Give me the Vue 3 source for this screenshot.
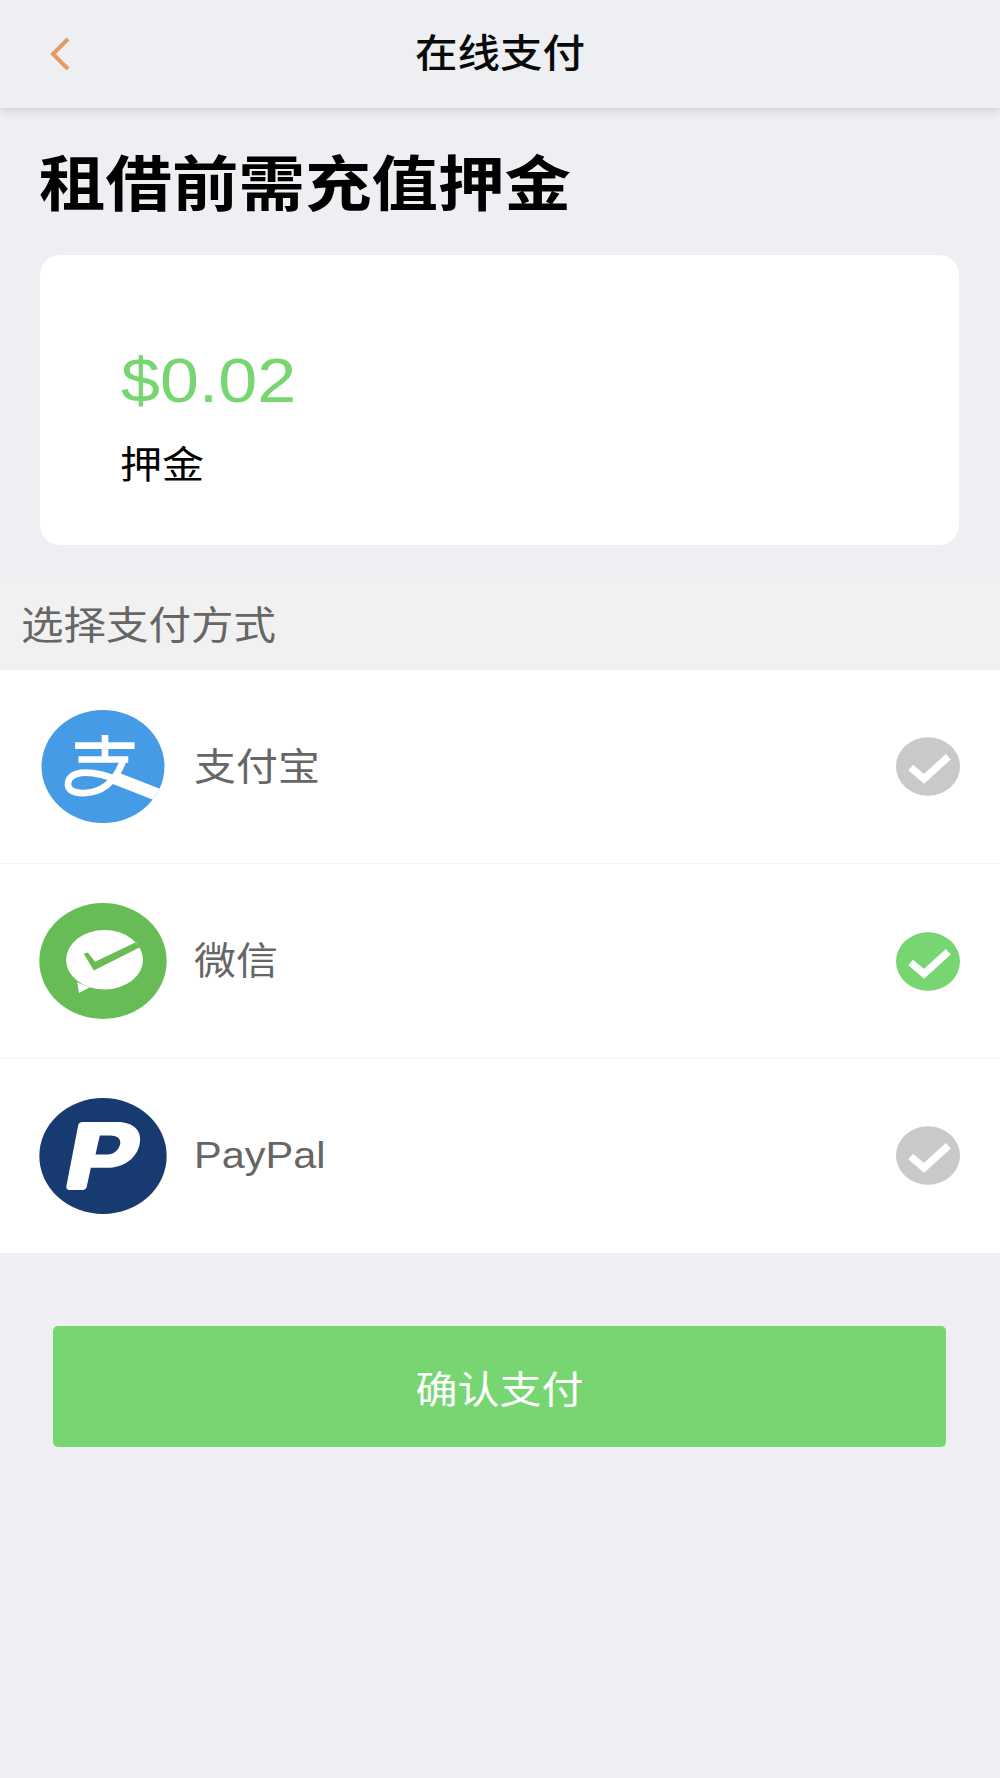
<script setup>
import { ref } from 'vue';

const methods = [
  { id: 'alipay', name: '支付宝' },
  { id: 'wechat', name: '微信' },
  { id: 'paypal', name: 'PayPal' }
];

const selected = ref('wechat');
</script>

<template>
  <div class="page">
    <header class="top-bar">
      <button class="back" aria-label="返回">
        <svg width="22" height="34" viewBox="0 0 22 34">
          <path d="M19 2 L4 17 L19 32" fill="none" stroke="#e49b66" stroke-width="4" />
        </svg>
      </button>
      <h1 class="top-title"><span class="squash">在线支付</span></h1>
    </header>

    <h2 class="headline"><span class="squash">租借前需充值押金</span></h2>

    <section class="deposit-card">
      <div class="amount"><span class="squash">$0.02</span></div>
      <div class="amount-label"><span class="squash">押金</span></div>
    </section>

    <div class="section-title"><span class="squash">选择支付方式</span></div>

    <ul class="method-list">
      <li
        v-for="method in methods"
        :key="method.id"
        class="method"
        :class="'method-' + method.id"
        @click="selected = method.id"
      >
        <!-- 支付宝 -->
        <svg v-if="method.id === 'alipay'" class="logo logo-alipay" viewBox="125 60 370 340">
          <defs>
            <clipPath id="alipay-clip"><ellipse cx="310" cy="230" rx="185" ry="170" /></clipPath>
          </defs>
          <ellipse cx="310" cy="230" rx="185" ry="170" fill="#459be5" />
          <g clip-path="url(#alipay-clip)" fill="none" stroke="#fff">
            <path d="M226 167 H405 M236 209 H386 M316 135 V209" stroke-width="20" />
            <path d="M372 209 C350 270 310 310 250 310 C215 310 200 296 206 274 C212 254 240 245 280 250 C320 255 350 268 400 290" stroke-width="20" />
            <path d="M345 264 L500 325" stroke-width="38" />
          </g>
        </svg>

        <!-- 微信 -->
        <svg v-else-if="method.id === 'wechat'" class="logo logo-wechat" viewBox="117 68 381 347">
          <ellipse cx="307.5" cy="241.5" rx="190.5" ry="173.5" fill="#68bc56" />
          <ellipse cx="312" cy="238" rx="115" ry="89" fill="#fff" />
          <path d="M230 305 L236 337 L268 320 Z" fill="#fff" />
          <path d="M250 220 L262 216 L284 244 L404 186 L418 200 L280 270 Z" fill="#68bc56" />
        </svg>

        <!-- PayPal -->
        <svg v-else class="logo logo-paypal" viewBox="117 85 381 347">
          <ellipse cx="307.5" cy="258.5" rx="190.5" ry="173.5" fill="#173b70" />
          <path
            fill="#fff"
            fill-rule="evenodd"
            d="M246 157 L350 157 C400 157 428 185 416 228 C405 270 365 294 320 294 L271 294 L259 350 Q257 360 246 360 L208 360 Q196 360 198 348 L233 168 Q235 157 246 157 Z M298 197 L285 254 L320 254 C345 254 356 236 359 222 C362 205 347 197 330 197 Z"
          />
        </svg>

        <span class="method-name"><span class="squash">{{ method.name }}</span></span>

        <svg class="check" viewBox="108 85 192 176">
          <ellipse cx="204" cy="173" rx="96" ry="88" :fill="selected === method.id ? '#77d672' : '#c9c9c9'" />
          <path d="M152 176 L192 210 L265 144" fill="none" stroke="#fff" stroke-width="22" />
        </svg>
      </li>
    </ul>

    <button class="confirm"><span class="squash">确认支付</span></button>
  </div>
</template>

<style>
html, body {
  margin: 0;
  background: #eeeef3;
}
</style>

<style scoped>
.page {
  min-height: 1778px;
  background: #eeeef3;
  font-family: "Liberation Sans", "Noto Sans CJK SC", sans-serif;
  overflow: hidden;
}

.squash {
  display: inline-block;
  transform: scaleY(0.9);
}

.top-bar {
  height: 108px;
  display: grid;
  grid-template-columns: 1fr auto 1fr;
  align-items: center;
  background: #eeeff3;
  box-shadow: 0 2px 10px rgba(0, 0, 0, 0.14);
}

.back {
  justify-self: start;
  display: flex;
  margin-left: 49px;
  padding: 0;
  border: none;
  background: transparent;
}

.top-title {
  margin: 0;
  font-size: 42.5px;
  line-height: 56px;
  font-weight: 500;
  color: #0a0a0a;
}

.headline {
  margin: 30px 0 0 39px;
  font-size: 66.5px;
  line-height: 94px;
  font-weight: 700;
  color: #000;
}

.deposit-card {
  margin: 23px 41px 0 40px;
  height: 290px;
  padding: 85px 0 0 80px;
  box-sizing: border-box;
  background: #fff;
  border-radius: 20px;
}

.amount {
  margin-left: 1px;
  font-size: 70px;
  line-height: 80px;
  color: #77d672;
}

.amount-label {
  margin-top: 17px;
  font-size: 42px;
  line-height: 56px;
  color: #000;
}

.section-title {
  margin-top: 39px;
  height: 86px;
  padding: 0 0 9px 21px;
  box-sizing: border-box;
  display: flex;
  align-items: center;
  background: #f1f1f2;
  font-size: 42.5px;
  color: #666;
}

.method-list {
  margin: 0;
  padding: 0;
  list-style: none;
  background: #fff;
}

.method {
  height: 194px;
  padding: 0 40px 0 39px;
  display: flex;
  align-items: center;
  box-sizing: border-box;
  border-bottom: 1px solid #f6f6f6;
}

.method-wechat {
  height: 195px;
}

.method:last-child {
  border-bottom: none;
}

.logo {
  width: 128px;
  height: 116px;
  flex: none;
}

.logo-alipay {
  width: 124px;
  height: 113px;
  margin-left: 2px;
  margin-right: 2px;
}

.method-name {
  flex: 1;
  margin-left: 27px;
  font-size: 42px;
  line-height: 56px;
  color: #666;
}

.method-paypal .method-name {
  padding-bottom: 3px;
  font-size: 41.5px;
}

.method-paypal .check {
  margin-bottom: 2px;
}

.check {
  width: 64px;
  height: 59px;
  flex: none;
}

.confirm {
  display: block;
  width: 893px;
  height: 121px;
  margin: 73px 0 0 53px;
  padding: 0;
  border: none;
  border-radius: 5px;
  background: #78d672;
  color: #fff;
  font-family: inherit;
  font-size: 42px;
}
</style>
